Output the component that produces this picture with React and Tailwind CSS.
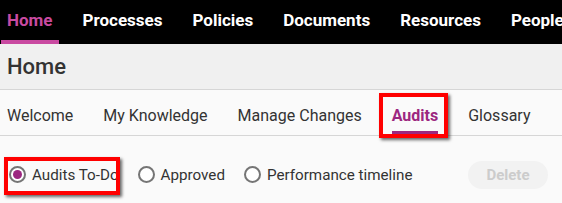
import React from 'react';

const navItems = ['Home', 'Processes', 'Policies', 'Documents', 'Resources', 'People'];
const tabs = ['Welcome', 'My Knowledge', 'Manage Changes', 'Audits', 'Glossary'];

const Radio = ({ label, checked }) => (
    <label className="flex items-center gap-[6px] cursor-pointer">
        <span className="w-[17px] h-[17px] rounded-full border-2 border-[#757575] flex items-center justify-center bg-white">
            {checked && <span className="w-[9px] h-[9px] rounded-full bg-[#9c2780]" />}
        </span>
        <span className="text-[15.2px] text-[#333]">{label}</span>
    </label>
);

const App = () => {
    return (
        <div className="relative w-[562px] h-[203px] overflow-hidden bg-[#fafafa]" style={{ fontFamily: 'Roboto, "Liberation Sans", sans-serif' }}>
            {/* top nav */}
            <div className="flex h-[44px] bg-black pl-[1px] gap-[18px] whitespace-nowrap">
                {navItems.map((item, i) => (
                    <div
                        key={item}
                        className={`px-[6px] flex items-center text-[17px] font-bold border-b-4 pt-[2px] ${i === 0 ? 'text-[#c94aa1] border-[#c94aa1]' : 'text-white border-transparent'}`}
                    >
                        {item}
                    </div>
                ))}
            </div>

            {/* page header */}
            <div className="h-[46px] bg-[#f0f0f0] border-b border-[#d6d6d6] flex items-center px-[7px]">
                <h1 className="text-[22px] font-medium text-[#333]">Home</h1>
            </div>

            {/* tabs */}
            <div className="h-[46px] flex border-b border-[#d6d6d6] pl-[7px] gap-[30px] whitespace-nowrap">
                {tabs.map((tab) => (
                    <div
                        key={tab}
                        className={`flex items-center text-[16px] border-b-4 pt-[10px] ${tab === 'Audits' ? 'font-bold text-[#9c2780] border-[#9c2780]' : 'text-[#333] border-transparent'}`}
                    >
                        {tab}
                    </div>
                ))}
            </div>

            {/* radio row */}
            <div className="flex items-center h-[78px] pl-[9px] pr-[14px]">
                <div className="flex items-center gap-[19px]">
                    <Radio label="Audits To-Do" checked />
                    <Radio label="Approved" />
                    <Radio label="Performance timeline" />
                </div>
                <button className="ml-auto w-[80px] h-[28px] rounded-full bg-[#f2f2f2] text-[15px] font-bold text-[#cccccc]">
                    Delete
                </button>
            </div>

            {/* annotation boxes */}
            <div className="absolute left-[379px] top-[93px] w-[69px] h-[45px] border-4 border-[#ff0000] shadow-[2px_2px_3px_rgba(0,0,0,0.6)]" />
            <div className="absolute left-[4px] top-[157px] w-[116px] h-[38px] border-4 border-[#ff0000] shadow-[2px_2px_3px_rgba(0,0,0,0.6)]" />
        </div>
    );
};

export default App;
